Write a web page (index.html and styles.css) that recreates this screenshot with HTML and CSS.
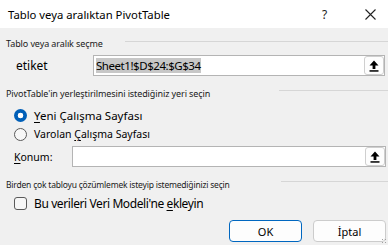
FILE: index.html
```html
<!DOCTYPE html>
<html lang="tr">
<head>
<meta charset="utf-8">
<title>Tablo veya aralıktan PivotTable</title>
<link rel="stylesheet" href="styles.css">
</head>
<body>
<div class="dialog">
  <div class="titlebar">
    <span class="title">Tablo veya aralıktan PivotTable</span>
    <span class="help">?</span>
    <svg class="close" width="11" height="11" viewBox="0 0 11 11"><path d="M0.5 0.5 L10.5 10.5 M10.5 0.5 L0.5 10.5" stroke="#222" stroke-width="1.1" fill="none"/></svg>
  </div>
  <div class="content">
    <div class="group-head g1">
      <span class="group-label">Tablo veya aralık seçme</span>
      <span class="rule rule-1"></span>
    </div>
    <div class="field-row r-etiket">
      <label class="field-label lbl-etiket">etiket</label>
      <div class="field">
        <span class="field-text"><span class="sel">Sheet1!$D$24:$G$34</span></span>
        <span class="pick">
          <svg width="10" height="12" viewBox="0 0 10 12"><path d="M5 0.5 L9.5 5.5 L6.4 5.5 L6.4 9 L3.6 9 L3.6 5.5 L0.5 5.5 Z" fill="#000"/><rect x="0.5" y="10.2" width="9" height="1.5" fill="#000"/></svg>
        </span>
      </div>
    </div>

    <div class="group-head g2">
      <span class="group-label">PivotTable'in yerleştirilmesini istediğiniz yeri seçin</span>
      <span class="rule rule-2"></span>
    </div>
    <div class="option r-new">
      <span class="radio on"></span>
      <span class="opt-text big"><u>Y</u>eni Çalışma Sayfası</span>
    </div>
    <div class="option r-old">
      <span class="radio"></span>
      <span class="opt-text small">Varolan <u>Ç</u>alışma Sayfası</span>
    </div>
    <div class="field-row r-konum">
      <label class="field-label lbl-konum small"><u>K</u>onum:</label>
      <div class="field">
        <span class="field-text"></span>
        <span class="pick">
          <svg width="10" height="12" viewBox="0 0 10 12"><path d="M5 0.5 L9.5 5.5 L6.4 5.5 L6.4 9 L3.6 9 L3.6 5.5 L0.5 5.5 Z" fill="#000"/><rect x="0.5" y="10.2" width="9" height="1.5" fill="#000"/></svg>
        </span>
      </div>
    </div>

    <div class="group-head g3">
      <span class="group-label tight-label">Birden çok tabloyu çözümlemek isteyip istemediğinizi seçin</span>
      <span class="rule rule-3"></span>
    </div>
    <div class="option r-check">
      <span class="checkbox"></span>
      <span class="opt-text big tight">Bu verileri Veri Modeli'ne <u>e</u>kleyin</span>
    </div>

    <div class="buttons">
      <button class="btn primary">OK</button>
      <button class="btn">İptal</button>
    </div>
  </div>
  <span class="grip"></span>
</div>
</body>
</html>
```
FILE: styles.css
```css
* { box-sizing: border-box; }
html, body { margin: 0; padding: 0; }
body {
  width: 388px;
  height: 245px;
  overflow: hidden;
  background: #f0f0f0;
  font-family: "Noto Sans", "Open Sans", sans-serif;
  color: #000;
}
.dialog {
  position: relative;
  width: 388px;
  height: 245px;
  display: flex;
  flex-direction: column;
}
.titlebar {
  height: 28px;
  background: #fff;
  display: flex;
  align-items: center;
  padding-left: 8px;
  flex: 0 0 28px;
}
.title {
  font-size: 11.3px;
  flex: 1;
  color: #000;
}
.help {
  font-size: 12px;
  color: #222;
  width: 10px;
  margin-right: 33px;
}
.close { margin-right: 12px; }

.content {
  display: flex;
  flex-direction: column;
  padding-left: 6px;
}
.group-head {
  height: 14px;
  display: flex;
  align-items: center;
}
.g1 { margin-top: 8px; }
.g2 { margin-top: 10px; }
.g3 { margin-top: 10px; }
.group-label {
  font-size: 9px;
  letter-spacing: -0.1px;
  color: #1a1a1a;
  white-space: nowrap;
}
.tight-label { font-size: 8.5px; letter-spacing: -0.2px; }
.rule {
  height: 1px;
  background: #d6d6d6;
  margin-left: auto;
}
.g1 .rule { margin-bottom: 4px; }
.g2 .rule, .g3 .rule { margin-bottom: 6px; }
.rule-1 { width: 263px; }
.rule-2 { width: 109px; }
.rule-3 { width: 107px; }

.field-row {
  display: flex;
  align-items: center;
  height: 21px;
  margin-right: 3px;
}
.r-etiket { margin-top: 5px; }
.r-konum { margin-top: 3px; margin-right: 2px; }
.field-label { flex: 0 0 auto; white-space: nowrap; }
.lbl-etiket { width: 87px; padding-left: 10px; font-size: 12px; }
.lbl-konum { width: 66px; padding-left: 8px; }
.field {
  flex: 1;
  height: 21px;
  background: #fff;
  border: 1px solid #b4b4b4;
  display: flex;
  align-items: center;
}
.field-text {
  flex: 1;
  padding-left: 2px;
  font-size: 11.5px;
  letter-spacing: -0.45px;
  line-height: 15px;
}
.sel { background: #c7c7c7; }
.pick {
  width: 20px;
  height: 19px;
  border: 1px solid #cfcfcf;
  border-radius: 3px;
  background: #fdfdfd;
  display: flex;
  align-items: center;
  justify-content: center;
}

.option {
  display: flex;
  align-items: center;
  padding-left: 8px;
  height: 18px;
}
.r-new { margin-top: 6px; }
.r-old { margin-top: 1px; }
.r-check { margin-top: 4px; height: 17px; }
.radio {
  width: 13px;
  height: 13px;
  border-radius: 50%;
  border: 1px solid #5a5a5a;
  background: #f7f7f7;
  flex: 0 0 13px;
}
.radio.on {
  border: none;
  background: radial-gradient(circle, #fff 0 2.6px, #005fb8 3.1px);
}
.checkbox {
  width: 13px;
  height: 13px;
  border: 1px solid #5a5a5a;
  border-radius: 3px;
  background: #f7f7f7;
  flex: 0 0 13px;
}
.opt-text { margin-left: 7px; white-space: nowrap; }
.big { font-size: 11.5px; }
.tight { font-size: 12px; letter-spacing: -0.4px; }
.small { font-size: 10.5px; }
u { text-decoration-thickness: 1px; text-underline-offset: 2px; }

.buttons {
  display: flex;
  justify-content: flex-end;
  gap: 11px;
  margin-top: 8px;
  margin-right: 2px;
}
.btn {
  width: 73px;
  height: 22px;
  border: 1px solid #cccccc;
  border-radius: 4px;
  background: #fdfdfd;
  font-family: "Noto Sans", "Open Sans", sans-serif;
  font-size: 11px;
  color: #000;
  padding: 0;
}
.btn.primary { border: 1.5px solid #0067c0; }
.grip {
  position: absolute;
  right: 1px;
  bottom: 1px;
  width: 6px;
  height: 6px;
  background-image: radial-gradient(circle, #a0a0a0 0.7px, transparent 0.9px);
  background-size: 3px 3px;
}
```
